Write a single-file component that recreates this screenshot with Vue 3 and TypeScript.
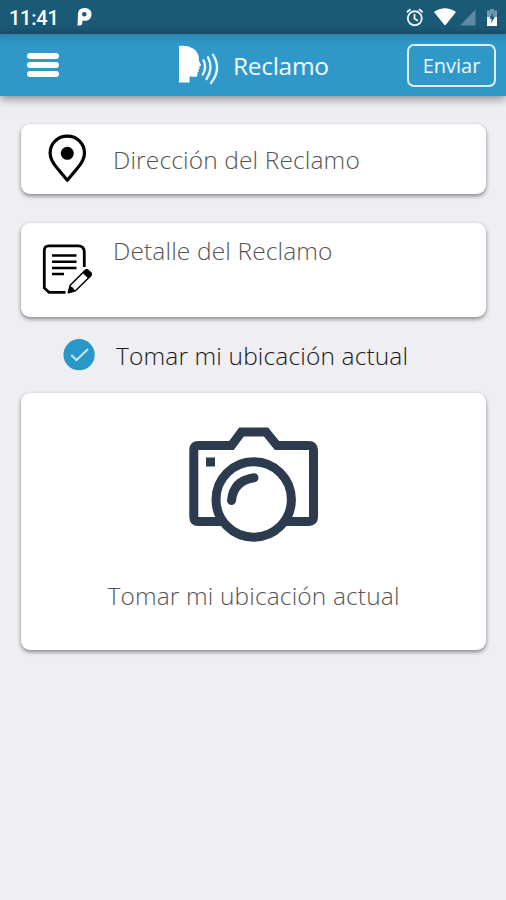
<script setup lang="ts">
import { ref } from 'vue'

const title = 'Reclamo'
const locationLabel = 'Tomar mi ubicación actual'
const useLocation = ref(true)
</script>

<template>
  <div class="screen">
    <div class="status">
      <span class="time">11:41</span>
      <svg class="pandora" width="16" height="20" viewBox="76 8 16 20">
        <path fill="#fff" fill-rule="evenodd" d="M78 15Q78 9 84.500 9C89 9 91.500 11.500 91.500 15.200C91.500 19.500 88.500 21.800 84.500 21.800H82.300V24.500Q82 26.500 80 26.500H77.500ZM84.300 13A2.300 2.300 0 1 0 84.300 17.600A2.300 2.300 0 1 0 84.300 13Z" />
      </svg>
      <svg class="system" width="100" height="34" viewBox="400 0 100 34">
        <g fill="none" stroke="#e8f0f3" stroke-width="1.900">
          <circle cx="414.800" cy="18.300" r="7" />
          <path d="M414.500 14V18.800L418 20.800M406.800 12.300L410.500 9.200M419 9.200L422.700 12.300" />
        </g>
        <path fill="#fff" d="M434 12Q445 4.500 456 12L446 24.500Q445 25.800 444 24.500Z" />
        <path fill="#5e8ba1" d="M475.500 9.500V25.500H460Z" />
        <path fill="#7198ab" d="M490 9H494V10.500H497V17H487V10.500H490Z" />
        <path fill="#fff" d="M487 17H497V26H487Z" />
        <path fill="#1b5a77" d="M493.500 12L489.300 18.700H491.700L490.800 23.500L495 16.800H492.600Z" />
      </svg>
    </div>

    <header class="bar">
      <button class="menu" aria-label="Menú"><i /><i /><i /></button>
      <div class="brand">
        <svg width="42" height="42" viewBox="178 44 42 42">
          <path fill="#fff" d="M179 46C188 44.800 196 48 198.500 55.500C199.200 58 198.300 60 199.500 62L201 65Q201.300 66.300 199.300 66.500L199.500 69L198.300 70L198.800 71.500L197.500 72.700V75.500Q197 77.300 194 76.800L189.500 76.500V82.500H179Z" />
          <g fill="none" stroke="#e4f5fc" stroke-width="2.400" stroke-linecap="round">
            <path d="M203.500 60.200Q207 67.500 202.800 74.500" />
            <path d="M208 57.300Q213.800 68 206.500 79" />
            <path d="M213 54.800Q222 69 211 83" />
          </g>
        </svg>
        <h1>{{ title }}</h1>
      </div>
      <button class="send">Enviar</button>
    </header>

    <main>
      <section class="card address">
        <svg width="40" height="50" viewBox="47 134 40 50">
          <path fill="none" stroke="#000" stroke-width="3.200" stroke-linejoin="round" d="M67.300 136.100C57.500 136.100 50.100 143.700 50.100 153C50.100 159.500 53.500 164 57.500 168.500L67.300 180.200L77.100 168.500C81.100 164 84.500 159.500 84.500 153C84.500 143.700 77.100 136.100 67.300 136.100Z" />
          <circle cx="67.300" cy="153.300" r="6.500" />
        </svg>
        <span class="label">Dirección del Reclamo</span>
      </section>

      <section class="card detail">
        <svg width="54" height="54" viewBox="40 242 54 54">
          <path fill="none" stroke="#000" stroke-width="2.800" d="M65.500 292.300H49L44.300 288V250.500Q44.300 245.800 49 245.800H78Q84.300 245.800 84.300 252V267" />
          <path stroke="#000" stroke-width="2.500" d="M52 255.500H76.500M52 261.800H76.500M52 268H76.500M52 274H64" />
          <path fill="#fff" stroke="#000" stroke-width="1.500" stroke-linejoin="round" d="M68.300 292.800L70.200 285.300L85 270.500Q86.800 269 88.500 270.700L90.500 272.500Q92 274.200 90.500 276L75.500 290.700Z" />
          <path d="M82.500 273L85.300 270.200Q87 268.800 88.700 270.300L91 272.500Q92.500 274.500 90.800 276.200L88.500 278.600ZM68 293L69.800 286.300Q73.500 287 75 291Z" />
        </svg>
        <span class="label">Detalle del Reclamo</span>
      </section>

      <label class="option">
        <input v-model="useLocation" type="checkbox">
        <svg width="32" height="32" viewBox="63 339 32 32">
          <circle cx="79.100" cy="354.700" r="15.600" fill="#2997c7" />
          <path v-if="useLocation" fill="none" stroke="#c5eaf9" stroke-width="2" d="M71.300 355L76.500 360L88 349" />
        </svg>
        <span class="label dark">{{ locationLabel }}</span>
      </label>

      <section class="card photo">
        <svg width="132" height="118" viewBox="188 425 132 118">
          <g fill="none" stroke="#2c3b4e" stroke-width="9">
            <path stroke-linejoin="round" d="M222 521.500H198Q193.800 521.500 193.800 517V449.500Q193.800 445.500 198 445.500H230.500" />
            <path d="M227 445.500H231.500L241.500 432H266L277 445.500H309Q313.500 445.500 313.500 450V517Q313.500 521.500 309 521.500H286" />
            <circle cx="253.700" cy="499.500" r="37.700" />
            <path stroke-linecap="round" d="M231.500 500.500Q233.500 480.500 254 477.700" />
          </g>
          <path fill="#2c3b4e" d="M206 457.500H215V466.500H206Z" />
        </svg>
        <span class="label">{{ locationLabel }}</span>
      </section>
    </main>
  </div>
</template>

<style>
body {
  margin: 0;
  background: #efeef3;
}
</style>

<style scoped>
.screen {
  height: 900px;
  overflow: hidden;
  background: #efeef3;
  font-family: "Open Sans", sans-serif;
}
.status {
  display: flex;
  align-items: center;
  box-sizing: border-box;
  height: 34px;
  padding: 0 6px 0 9px;
  background: #1b5a77;
}
.time {
  width: 67px;
  padding-top: 2px;
  color: #fff;
  font: 500 20px/20px Roboto, sans-serif;
  letter-spacing: -0.250px;
}
.system {
  margin-left: auto;
}
.bar {
  display: flex;
  align-items: center;
  position: relative;
  box-sizing: border-box;
  height: 62px;
  padding: 0 10px 0 27px;
  background: linear-gradient(#2c87b3, #2f98c9 10px);
  box-shadow: 0 2px 10px rgb(0 0 0 / 50%);
}
button {
  padding: 0;
  border: 0;
  background: none;
  font-family: inherit;
}
.menu {
  display: flex;
  flex-direction: column;
  gap: 3px;
  width: 32px;
}
.menu i {
  height: 6px;
  border-radius: 3px;
  background: #fff;
}
.brand {
  display: flex;
  align-items: center;
  gap: 13px;
  margin-left: 119px;
}
h1 {
  margin: 0;
  padding-top: 2px;
  color: #f1fafe;
  font-size: 24.500px;
  font-weight: 400;
  line-height: 34px;
  letter-spacing: -0.300px;
  white-space: nowrap;
}
.send {
  box-sizing: border-box;
  width: 89px;
  height: 43px;
  margin-left: auto;
  border: 2px solid #d8f1fb;
  border-radius: 7px;
  color: #eaf8fe;
  font-size: 20px;
}
main {
  padding: 28px 20px 0 21px;
}
.card {
  display: flex;
  box-sizing: border-box;
  border-radius: 9px;
  background: #fff;
  box-shadow: 0 2px 4px rgb(0 0 0 / 46%);
}
.label {
  color: #555;
  font-size: 24.500px;
  font-weight: 320;
  line-height: 34px;
  letter-spacing: 0.140px;
  white-space: nowrap;
}
.address {
  align-items: center;
  gap: 26px;
  height: 70px;
  padding-left: 26px;
}
.address .label,
.option .label {
  padding-top: 2px;
}
.detail {
  align-items: flex-start;
  gap: 19px;
  height: 94px;
  margin-top: 29px;
  padding: 11px 0 0 19px;
}
.detail svg {
  margin-top: 8px;
}
.option {
  display: flex;
  align-items: center;
  gap: 21px;
  height: 32px;
  margin: 22px 0;
  padding-left: 42px;
}
.option input {
  display: none;
}
.dark {
  color: #18181b;
}
.photo {
  flex-direction: column;
  align-items: center;
  gap: 36px;
  height: 257px;
  padding-top: 32px;
}
</style>
